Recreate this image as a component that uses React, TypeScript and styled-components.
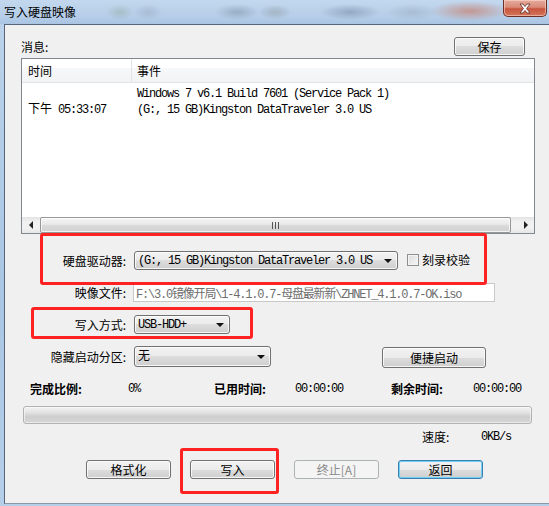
import React from "react";
import styled, { createGlobalStyle } from "styled-components";

const CJK = `"Noto Sans CJK SC", "Microsoft YaHei", sans-serif`;
const MONO = `"Liberation Mono", "Noto Sans CJK SC", monospace`;

const Global = createGlobalStyle`
  html, body { margin: 0; padding: 0; background: #b9d1ea; }
  body { font-family: ${CJK}; font-size: 12px; color: #000; }
  * { box-sizing: border-box; }
`;

const Window = styled.div`
  position: relative;
  width: 549px;
  height: 506px;
  overflow: hidden;
  display: flex;
  flex-direction: column;
  background: linear-gradient(to bottom, #bcd3ea, #a9c6e4 60%, #b6cfe9);
`;

const TitleBar = styled.div`
  height: 24px;
  flex: none;
  display: flex;
  justify-content: space-between;
  align-items: flex-start;
  background:
    radial-gradient(ellipse 22px 8px at 237px 12px, rgba(90, 110, 130, 0.35), transparent),
    radial-gradient(ellipse 14px 8px at 120px 12px, rgba(120, 150, 120, 0.3), transparent),
    radial-gradient(ellipse 14px 8px at 148px 12px, rgba(130, 140, 160, 0.3), transparent),
    radial-gradient(ellipse 16px 8px at 275px 12px, rgba(190, 190, 150, 0.35), transparent),
    radial-gradient(ellipse 16px 7px at 275px 12px, rgba(80, 110, 200, 0.3), transparent),
    radial-gradient(ellipse 30px 8px at 350px 12px, rgba(80, 95, 120, 0.35), transparent),
    radial-gradient(ellipse 26px 8px at 412px 12px, rgba(120, 130, 145, 0.25), transparent),
    radial-gradient(ellipse 40px 10px at 470px 11px, rgba(200, 120, 100, 0.65), transparent),
    linear-gradient(to bottom, #c3d8ee, #b5cde8 70%, #a9c4e2);
`;

const Title = styled.div`
  padding-left: 4px;
  line-height: 24px;
  font-size: 12px;
  color: #000;
`;

const CloseButton = styled.div`
  width: 44px;
  height: 17px;
  margin-right: 2px;
  display: flex;
  align-items: center;
  justify-content: center;
  border: 1px solid #6e3026;
  border-top: none;
  border-radius: 0 0 5px 5px;
  background: linear-gradient(to bottom, #e6ab9c 0%, #d98a78 45%, #c8553e 55%, #d4765c 100%);
  box-shadow: inset 0 0 0 1px rgba(255, 220, 210, 0.55);
`;

const Client = styled.div`
  margin-left: 4px;
  height: 480px;
  flex: none;
  border: 1px solid #56667a;
  border-right: none;
  border-bottom-color: #8a97a6;
  background: #f0f0f0;
  padding: 12px 0 0 16px;
  display: flex;
  flex-direction: column;
`;

const HeaderRow = styled.div`
  width: 514px;
  height: 19px;
  padding-right: 10px;
  display: flex;
  justify-content: space-between;
  align-items: flex-end;
`;

const Caption = styled.span`
  line-height: 14px;
  margin-bottom: 2px;
`;

const Button = styled.div<{ $w: number; $h?: number; $variant?: "normal" | "default" | "disabled" }>`
  width: ${(p) => p.$w}px;
  height: ${(p) => p.$h ?? 19}px;
  flex: none;
  display: flex;
  align-items: center;
  justify-content: center;
  font-size: 12px;
  line-height: 14px;
  border-radius: 3px;
  border: 1px solid
    ${(p) => (p.$variant === "default" ? "#3c7fb1" : p.$variant === "disabled" ? "#adb2b5" : "#707070")};
  color: ${(p) => (p.$variant === "disabled" ? "#8a8a8a" : "#000")};
  background: ${(p) =>
    p.$variant === "disabled"
      ? "#f4f4f4"
      : "linear-gradient(to bottom, #f2f2f2 0%, #ebebeb 50%, #dddddd 50%, #cfcfcf 100%)"};
  box-shadow: ${(p) =>
    p.$variant === "default"
      ? "inset 0 0 0 1px #6fd0f5"
      : p.$variant === "disabled"
      ? "none"
      : "inset 0 0 0 1px rgba(255,255,255,0.8)"};
`;

const ListBox = styled.div`
  margin-top: 2px;
  width: 514px;
  height: 176px;
  border: 1px solid #828790;
  background: #fff;
  display: flex;
  flex-direction: column;
`;

const ListHeader = styled.div`
  height: 24px;
  flex: none;
  display: grid;
  grid-template-columns: 110px 1fr;
  border-bottom: 1px solid #e2e3e5;
  background: linear-gradient(to bottom, #ffffff 0%, #ffffff 40%, #f7f8f9 40%, #f2f3f5 100%);
`;

const HeaderCell = styled.div<{ $divider?: boolean; $pad: number }>`
  line-height: 23px;
  padding-left: ${(p) => p.$pad}px;
  border-right: ${(p) => (p.$divider ? "1px solid #e2e3e5" : "none")};
`;

const ListBody = styled.div`
  flex: 1;
  padding-top: 3px;
`;

const ListRow = styled.div`
  display: grid;
  grid-template-columns: 110px 1fr;
`;

const TimeCell = styled.div`
  align-self: end;
  padding-left: 6px;
  font-family: ${MONO};
  font-size: 12px;
  letter-spacing: -1.2px;
  line-height: 16px;
  white-space: pre;
`;

const TimeCjk = styled.span`
  font-family: ${CJK};
  font-size: 12px;
  letter-spacing: 0;
`;

const EventCell = styled.div`
  padding-left: 5px;
  font-family: ${MONO};
  font-size: 12px;
  letter-spacing: -1.2px;
  line-height: 16px;
  white-space: pre;
`;

const HScroll = styled.div`
  height: 16px;
  flex: none;
  display: flex;
  background: linear-gradient(to bottom, #e3e3e3, #f1f1f1 30%, #f1f1f1 70%, #e6e6e6);
`;

const ScrollArrow = styled.div<{ $dir: "left" | "right" }>`
  width: 17px;
  flex: none;
  display: flex;
  align-items: center;
  justify-content: center;
  &::before {
    content: "";
    width: 0;
    height: 0;
    border-top: 4px solid transparent;
    border-bottom: 4px solid transparent;
    ${(p) => (p.$dir === "left" ? "border-right: 4px solid #222;" : "border-left: 4px solid #222;")}
  }
`;

const Track = styled.div`
  flex: 1;
  display: flex;
  padding: 0 6px 0 1px;
`;

const Thumb = styled.div`
  flex: 1;
  display: flex;
  align-items: center;
  justify-content: center;
  border: 1px solid #979797;
  border-radius: 2px;
  background: linear-gradient(to bottom, #f5f5f5 0%, #e9e9e9 45%, #d9d9d9 55%, #d2d2d2 100%);
  box-shadow: inset 0 0 0 1px rgba(255, 255, 255, 0.7);
`;

const Grip = styled.div`
  width: 7px;
  height: 7px;
  background: repeating-linear-gradient(to right, #555 0 1px, transparent 1px 3px);
`;

const FormRow = styled.div<{ $mt: number; $h?: number }>`
  margin-top: ${(p) => p.$mt}px;
  height: ${(p) => p.$h ?? 19}px;
  display: flex;
  align-items: flex-start;
`;

const FieldLabel = styled.div`
  width: 105px;
  height: 100%;
  flex: none;
  display: flex;
  align-items: center;
  justify-content: flex-end;
  line-height: 14px;
  margin-right: 8px;
`;

const Combo = styled.div<{ $w: number; $h?: number }>`
  width: ${(p) => p.$w}px;
  height: ${(p) => p.$h ?? 19}px;
  flex: none;
  display: flex;
  align-items: center;
  padding: 0 5px 0 3px;
  border: 1px solid #707070;
  border-radius: 3px;
  background: linear-gradient(to bottom, #f2f2f2 0%, #ebebeb 50%, #dddddd 50%, #cfcfcf 100%);
  box-shadow: inset 0 0 0 1px rgba(255, 255, 255, 0.8);
`;

const ComboText = styled.span`
  flex: 1;
  font-family: ${MONO};
  font-size: 12px;
  letter-spacing: -1.2px;
  line-height: 14px;
  white-space: pre;
  overflow: hidden;
`;

const ComboArrow = styled.span`
  width: 0;
  height: 0;
  flex: none;
  border-left: 4px solid transparent;
  border-right: 4px solid transparent;
  border-top: 4px solid #111;
`;

const CheckBox = styled.div`
  width: 12px;
  height: 12px;
  flex: none;
  margin: 3px 3px 0 9px;
  border: 1px solid #8e8f8f;
  background: linear-gradient(135deg, #dcdcdc, #f6f6f6);
  box-shadow: inset 0 0 0 1px #f4f4f4;
`;

const CheckText = styled.span`
  line-height: 18px;
`;

const PathInput = styled.div`
  width: 362px;
  height: 19px;
  margin-left: -1px;
  display: flex;
  align-items: center;
  padding-left: 2px;
  border: 1px solid #c8c8c8;
  background: #fff;
  color: #6d6d6d;
  font-family: ${MONO};
  font-size: 12px;
  letter-spacing: -1.2px;
  white-space: pre;
  overflow: hidden;
`;

const ShortcutButton = styled(Button)`
  margin-top: 1px;
  margin-left: 111px;
`;

const StatsRow = styled.div`
  margin-top: 14px;
  padding-left: 9px;
  display: grid;
  grid-template-columns: 98px 86px 81px 96px 82px auto;
  line-height: 14px;
`;

const StatLabel = styled.span`
  font-weight: 700;
  font-size: 12px;
`;

const StatValue = styled.span`
  font-family: ${MONO};
  font-size: 12px;
  letter-spacing: -1.2px;
`;

const Progress = styled.div`
  margin: 10px 0 0 2px;
  width: 509px;
  height: 18px;
  border: 1px solid #b2b2b2;
  border-radius: 3px;
  background: linear-gradient(to bottom, #f3f3f3 0%, #e2e2e2 35%, #cecece 60%, #d6d6d6 100%);
  box-shadow: inset 0 0 0 1px rgba(255, 255, 255, 0.5);
`;

const SpeedRow = styled.div`
  margin-top: 6px;
  padding-left: 401px;
  display: grid;
  grid-template-columns: 59px auto;
  line-height: 14px;
`;

const ButtonRow = styled.div`
  margin-top: 16px;
  padding-left: 65px;
  display: flex;
  gap: 19px;
`;

const Annotation = styled.div<{ $x: number; $y: number; $w: number; $h: number }>`
  position: absolute;
  left: ${(p) => p.$x}px;
  top: ${(p) => p.$y}px;
  width: ${(p) => p.$w}px;
  height: ${(p) => p.$h}px;
  border: 3px solid #ff2222;
  border-radius: 3px;
  pointer-events: none;
`;

export default function App() {
  return (
    <>
      <Global />
      <Window>
        <TitleBar>
          <Title>写入硬盘映像</Title>
          <CloseButton>
            <svg width="12" height="11" viewBox="0 0 12 11">
              <path
                d="M1 1 L4 1 L6 3.5 L8 1 L11 1 L7.6 5.5 L11 10 L8 10 L6 7.5 L4 10 L1 10 L4.4 5.5 Z"
                fill="#fff"
                stroke="#5a2a22"
                strokeWidth="0.8"
                strokeLinejoin="round"
              />
            </svg>
          </CloseButton>
        </TitleBar>
        <Client>
          <HeaderRow>
            <Caption>消息:</Caption>
            <Button $w={71}>保存</Button>
          </HeaderRow>
          <ListBox>
            <ListHeader>
              <HeaderCell $divider $pad={6}>时间</HeaderCell>
              <HeaderCell $pad={5}>事件</HeaderCell>
            </ListHeader>
            <ListBody>
              <ListRow>
                <TimeCell>
                  <TimeCjk>下午</TimeCjk> 05:33:07
                </TimeCell>
                <EventCell>
                  {"Windows 7 v6.1 Build 7601 (Service Pack 1)\n(G:, 15 GB)Kingston DataTraveler 3.0 US"}
                </EventCell>
              </ListRow>
            </ListBody>
            <HScroll>
              <ScrollArrow $dir="left" />
              <Track>
                <Thumb>
                  <Grip />
                </Thumb>
              </Track>
              <ScrollArrow $dir="right" />
            </HScroll>
          </ListBox>

          <FormRow $mt={17}>
            <FieldLabel>硬盘驱动器:</FieldLabel>
            <Combo $w={264}>
              <ComboText>(G:, 15 GB)Kingston DataTraveler 3.0 US</ComboText>
              <ComboArrow />
            </Combo>
            <CheckBox />
            <CheckText>刻录校验</CheckText>
          </FormRow>

          <FormRow $mt={13}>
            <FieldLabel>映像文件:</FieldLabel>
            <PathInput>F:\3.0镜像开局\1-4.1.0.7-母盘最新新\ZHNET_4.1.0.7-OK.iso</PathInput>
          </FormRow>

          <FormRow $mt={13}>
            <FieldLabel>写入方式:</FieldLabel>
            <Combo $w={96}>
              <ComboText>USB-HDD+</ComboText>
              <ComboArrow />
            </Combo>
          </FormRow>

          <FormRow $mt={12} $h={22}>
            <FieldLabel>隐藏启动分区:</FieldLabel>
            <Combo $w={137} $h={21}>
              <ComboText>无</ComboText>
              <ComboArrow />
            </Combo>
            <ShortcutButton $w={104} $h={21}>便捷启动</ShortcutButton>
          </FormRow>

          <StatsRow>
            <StatLabel>完成比例:</StatLabel>
            <StatValue>0%</StatValue>
            <StatLabel>已用时间:</StatLabel>
            <StatValue>00:00:00</StatValue>
            <StatLabel>剩余时间:</StatLabel>
            <StatValue>00:00:00</StatValue>
          </StatsRow>

          <Progress />

          <SpeedRow>
            <span>速度:</span>
            <StatValue>0KB/s</StatValue>
          </SpeedRow>

          <ButtonRow>
            <Button $w={85}>格式化</Button>
            <Button $w={85}>写入</Button>
            <Button $w={85} $variant="disabled">终止[A]</Button>
            <Button $w={85} $variant="default">返回</Button>
          </ButtonRow>
        </Client>

        <Annotation $x={40} $y={233} $w={447} $h={52} />
        <Annotation $x={31} $y={307} $w={222} $h={32} />
        <Annotation $x={180} $y={448} $w={99} $h={46} />
      </Window>
    </>
  );
}
